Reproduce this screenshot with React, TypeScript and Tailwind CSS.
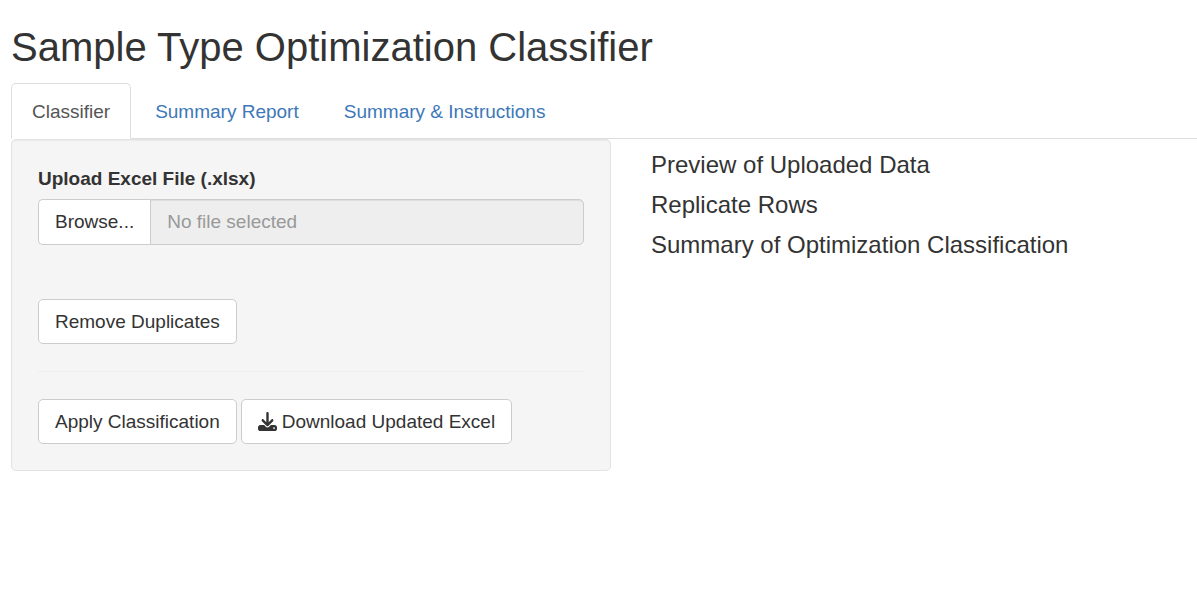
import { useRef, useState } from "react";
import { FaDownload } from "react-icons/fa6";

const tabs = ["Classifier", "Summary Report", "Summary & Instructions"];

const buttonClass =
  "inline-flex items-center justify-center gap-[5px] whitespace-nowrap rounded-[5px] border border-[#ccc] bg-white px-4 h-[45px] text-[#333] hover:bg-[#e6e6e6]";

export default function App() {
  const [active, setActive] = useState(0);
  const [fileName, setFileName] = useState("");
  const fileRef = useRef<HTMLInputElement>(null);

  return (
    <div className="pl-[11px] pt-[25px] pb-6 font-['Liberation_Sans',Arial,sans-serif] text-[19px] leading-[27px] text-[#333]">
      <h1 className="mb-[14px] text-[40px] leading-[44px]">Sample Type Optimization Classifier</h1>

      <nav className="border-b border-[#ddd]">
        <ul className="-mb-px flex gap-[3px]">
          {tabs.map((tab, i) => (
            <li key={tab}>
              <a
                href="#"
                onClick={(e) => {
                  e.preventDefault();
                  setActive(i);
                }}
                className={
                  i === active
                    ? "block rounded-t-[5px] border border-[#ddd] border-b-white bg-white px-5 pt-[15px] pb-[13px] leading-[26px] text-[#555]"
                    : "block rounded-t-[5px] border border-transparent px-5 pt-[15px] pb-[13px] leading-[26px] text-[#3d78b8] hover:bg-[#eee]"
                }
              >
                {tab}
              </a>
            </li>
          ))}
        </ul>
      </nav>

      <main className="flex gap-10">
        <form
          className="min-w-0 basis-[600px] rounded-[5px] border border-[#e3e3e3] bg-[#f5f5f5] p-[26px] pt-[25px] shadow-[inset_0_1px_1px_rgba(0,0,0,0.05)]"
          onSubmit={(e) => e.preventDefault()}
        >
          <label htmlFor="file" className="mb-[7px] block font-bold">
            Upload Excel File (.xlsx)
          </label>
          <div className="flex h-[46px]">
            <button
              type="button"
              className="rounded-l-[5px] border border-r-0 border-[#ccc] bg-white px-4 pb-[2px] hover:bg-[#e6e6e6]"
              onClick={() => fileRef.current?.click()}
            >
              Browse...
            </button>
            <input
              id="file"
              ref={fileRef}
              type="file"
              accept=".xlsx"
              className="hidden"
              onChange={(e) => setFileName(e.target.files?.[0]?.name ?? "")}
            />
            <input
              type="text"
              readOnly
              aria-label="Selected file"
              placeholder="No file selected"
              value={fileName}
              className="min-w-0 flex-1 rounded-r-[5px] border border-[#ccc] bg-[#eee] px-4 pb-[2px] text-[#555] shadow-[inset_0_1px_1px_rgba(0,0,0,0.075)] placeholder:text-[#999]"
            />
          </div>

          <button type="button" className={buttonClass + " mt-[54px]"}>
            Remove Duplicates
          </button>

          <hr className="my-[27px] border-[#eee]" />

          <div className="flex flex-wrap gap-1">
            <button type="submit" className={buttonClass}>
              Apply Classification
            </button>
            <button type="button" className={buttonClass}>
              <FaDownload aria-hidden="true" />
              Download Updated Excel
            </button>
          </div>
        </form>

        <section className="flex flex-col gap-[14px] pt-[13px] text-2xl leading-[26px]">
          <h2>Preview of Uploaded Data</h2>
          <h2>Replicate Rows</h2>
          <h2>Summary of Optimization Classification</h2>
        </section>
      </main>
    </div>
  );
}
